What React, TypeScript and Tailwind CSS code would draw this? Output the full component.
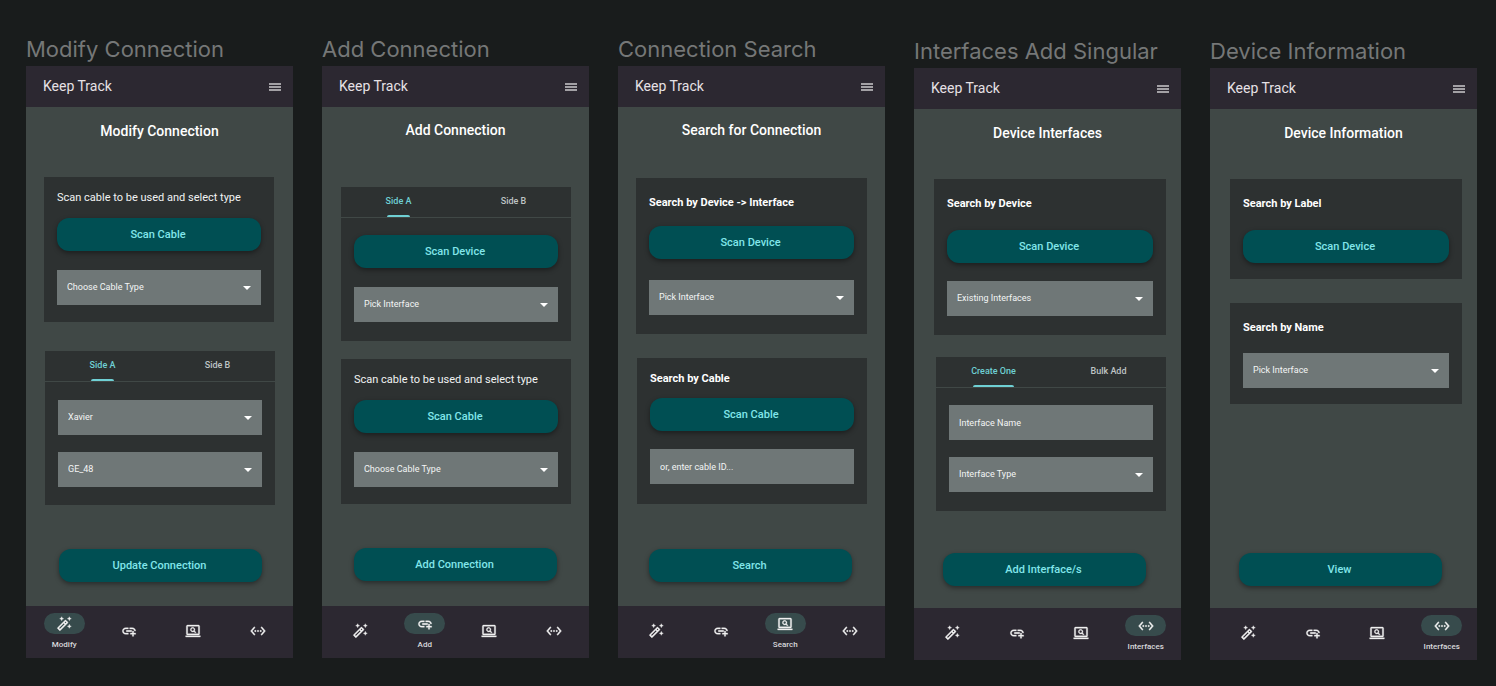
import React, { useState } from "react";
import {
  MdAddLink,
  MdOutlineAutoFixHigh,
  MdOutlineScreenSearchDesktop,
  MdSettingsEthernet,
} from "react-icons/md";
import clsx from "clsx";

const NAV_ITEMS = [
  { name: "Modify", Icon: MdOutlineAutoFixHigh },
  { name: "Add", Icon: MdAddLink },
  { name: "Search", Icon: MdOutlineScreenSearchDesktop },
  { name: "Interfaces", Icon: MdSettingsEthernet },
];

function BottomNav({ active }: { active: string }) {
  return (
    <nav className="flex h-[52px] bg-[#2c2831] pl-[6px] pr-[3px]">
      {NAV_ITEMS.map(({ name, Icon }) => {
        const isActive = name === active;
        return (
          <a
            key={name}
            href={`#${name.toLowerCase()}`}
            aria-label={name}
            aria-current={isActive ? "page" : undefined}
            className={clsx(
              "flex flex-1 flex-col items-center text-[#f1f1f1]",
              isActive ? "pt-[7px]" : "pt-[14px]"
            )}
          >
            <span
              className={clsx(
                "flex h-[21px] w-[41px] items-center justify-center rounded-full",
                isActive && "bg-[#374b4c]"
              )}
            >
              <Icon className="size-4 [&_path:not([fill=none])]:stroke-current [&_path:not([fill=none])]:stroke-[0.5]" />
            </span>
            {isActive && (
              <span className="mt-[6px] text-[8px] leading-[10px] font-medium text-[#d9d9dc]">{name}</span>
            )}
          </a>
        );
      })}
    </nav>
  );
}

type ScreenProps = {
  label: string;
  heading: string;
  nav: string;
  action: string;
  className?: string;
  headingClass?: string;
  actionClass: string;
  children: React.ReactNode;
};

function Screen({ label, heading, nav, action, className, headingClass, actionClass, children }: ScreenProps) {
  return (
    <section className={clsx("flex min-w-0 flex-col", className)}>
      <h2 className="pb-px font-['Inter',sans-serif] text-[22px] leading-8 whitespace-nowrap text-[#757777]">
        {label}
      </h2>
      <div className="flex flex-col">
        <header className="flex h-[41px] items-center justify-between bg-[#2c2831] pr-3 pb-px pl-[17px]">
          <span className="text-[14px] leading-5 text-[#e6e1e5]">Keep Track</span>
          <button type="button" aria-label="Menu" className="flex w-3 flex-col gap-px pt-[2px]">
            <span className="h-[2px] w-full bg-[#a3a1a5]" />
            <span className="h-[2px] w-full bg-[#a3a1a5]" />
            <span className="h-[2px] w-full bg-[#a3a1a5]" />
          </button>
        </header>
        <main className="flex min-h-[499px] flex-col bg-[#404846]">
          <h1
            className={clsx(
              "text-center text-[14px] leading-5 font-medium text-white",
              headingClass ?? "pt-[14px]"
            )}
          >
            {heading}
          </h1>
          {children}
          <div className={clsx("mt-auto", actionClass)}>
            <ActionButton>{action}</ActionButton>
          </div>
        </main>
        <BottomNav active={nav} />
      </div>
    </section>
  );
}

function ActionButton({ children }: { children: React.ReactNode }) {
  return (
    <button
      type="button"
      className="block h-[33px] w-full rounded-xl bg-[#004f53] pr-[2px] text-[11px] leading-4 font-medium text-[#82e6ea] shadow-[0_2px_5px_rgba(0,0,0,0.4)]"
    >
      {children}
    </button>
  );
}

function Card({ className, children }: { className: string; children: React.ReactNode }) {
  return <div className={clsx("bg-[#2d3131]", className)}>{children}</div>;
}

function Dropdown({ label, options = [] }: { label: string; options?: string[] }) {
  return (
    <div className="relative">
      <select
        aria-label={label}
        className="block h-[35px] w-full appearance-none bg-[#6f7777] pr-7 pb-px pl-[10px] text-[9px] leading-4 text-[#f3f5f5]"
      >
        <option>{label}</option>
        {options.map((option) => (
          <option key={option}>{option}</option>
        ))}
      </select>
      <svg
        viewBox="0 0 8 4"
        className="pointer-events-none absolute top-4 right-[10px] h-1 w-2 fill-white"
        aria-hidden="true"
      >
        <path d="M0 0h8L4 4z" />
      </svg>
    </div>
  );
}

function TextField({ label }: { label: string }) {
  return (
    <input
      type="text"
      aria-label={label}
      placeholder={label}
      className="block h-[35px] w-full bg-[#6f7777] px-[10px] text-[9px] leading-4 text-[#f3f5f5] placeholder:text-[#f3f5f5]"
    />
  );
}

function Tabs({ items }: { items: string[] }) {
  const [selected, setSelected] = useState(items[0]);
  return (
    <div role="tablist" className="flex h-[31px] border-b border-[#404846]">
      {items.map((item) => (
        <div key={item} className="flex flex-1 justify-center">
          <button
            type="button"
            role="tab"
            aria-selected={item === selected}
            onClick={() => setSelected(item)}
            className={clsx(
              "flex flex-col items-center justify-between text-[9px] leading-7 font-medium",
              item === selected ? "text-[#6fd0d4]" : "text-[#bec4c4]"
            )}
          >
            {item}
            {item === selected && <span className="h-[2px] w-11/12 rounded-t-full bg-[#6fd0d4]" />}
          </button>
        </div>
      ))}
    </div>
  );
}

function Hint({ children }: { children: React.ReactNode }) {
  return <p className="text-[11px] leading-4 whitespace-nowrap text-[#f1f3f3]">{children}</p>;
}

function CardTitle({ children }: { children: React.ReactNode }) {
  return <h3 className="text-[11px] leading-4 font-bold whitespace-nowrap text-white">{children}</h3>;
}

function ScanCableCard({ className }: { className: string }) {
  return (
    <Card className={clsx("px-[13px] pt-[13px] pb-[17px]", className)}>
      <Hint>Scan cable to be used and select type</Hint>
      <div className="mt-3 flex flex-col gap-[19px]">
        <ActionButton>Scan Cable</ActionButton>
        <Dropdown label="Choose Cable Type" />
      </div>
    </Card>
  );
}

export default function App() {
  return (
    <div className="min-h-screen bg-[#191c1c] pt-[33px] pr-[19px] pb-[26px] pl-[26px] font-['Roboto',sans-serif]">
      <div className="grid grid-cols-5 items-start gap-[29px]">
        <Screen
          label="Modify Connection"
          heading="Modify Connection"
          nav="Modify"
          action="Update Connection"
          actionClass="mr-[31px] mb-6 ml-[33px]"
        >
          <ScanCableCard className="mt-9 mr-[19px] ml-[18px]" />
          <Card className="mt-[29px] mr-[18px] ml-[19px]">
            <Tabs items={["Side A", "Side B"]} />
            <div className="flex flex-col gap-[17px] px-[13px] pt-[18px] pb-[18px]">
              <Dropdown label="Xavier" />
              <Dropdown label="GE_48" />
            </div>
          </Card>
        </Screen>

        <Screen
          label="Add Connection"
          heading="Add Connection"
          nav="Add"
          action="Add Connection"
          headingClass="pt-[13px]"
          actionClass="mx-8 mb-[25px]"
        >
          <Card className="mt-[47px] mr-[18px] ml-[19px]">
            <Tabs items={["Side A", "Side B"]} />
            <div className="flex flex-col gap-[19px] px-[13px] pt-[17px] pb-[19px]">
              <ActionButton>Scan Device</ActionButton>
              <Dropdown label="Pick Interface" />
            </div>
          </Card>
          <ScanCableCard className="mt-[18px] mr-[18px] ml-[19px]" />
        </Screen>

        <Screen
          label="Connection Search"
          heading="Search for Connection"
          nav="Search"
          action="Search"
          headingClass="pt-[13px]"
          actionClass="mr-[33px] mb-6 ml-[31px]"
        >
          <Card className="mt-[38px] mr-[18px] ml-[18px] px-[13px] pt-[17px] pb-[19px]">
            <CardTitle>Search by Device -&gt; Interface</CardTitle>
            <div className="mt-[15px] flex flex-col gap-[21px]">
              <ActionButton>Scan Device</ActionButton>
              <Dropdown label="Pick Interface" />
            </div>
          </Card>
          <Card className="mt-6 mr-[18px] ml-[19px] px-[13px] pt-[13px] pb-5">
            <CardTitle>Search by Cable</CardTitle>
            <div className="mt-[11px] flex flex-col gap-[18px]">
              <ActionButton>Scan Cable</ActionButton>
              <TextField label="or, enter cable ID..." />
            </div>
          </Card>
        </Screen>

        <Screen
          label="Interfaces Add Singular"
          heading="Device Interfaces"
          nav="Interfaces"
          action="Add Interface/s"
          className="pt-[2px]"
          actionClass="mr-[35px] mb-[22px] ml-[29px]"
        >
          <Card className="mt-9 mr-[15px] ml-[20px] px-[13px] pt-[17px] pb-[19px]">
            <CardTitle>Search by Device</CardTitle>
            <div className="mt-[18px] flex flex-col gap-[18px]">
              <ActionButton>Scan Device</ActionButton>
              <Dropdown label="Existing Interfaces" />
            </div>
          </Card>
          <Card className="mt-[22px] mr-[15px] ml-[22px]">
            <Tabs items={["Create One", "Bulk Add"]} />
            <div className="flex flex-col gap-[17px] px-[13px] pt-[17px] pb-[19px]">
              <TextField label="Interface Name" />
              <Dropdown label="Interface Type" />
            </div>
          </Card>
        </Screen>

        <Screen
          label="Device Information"
          heading="Device Information"
          nav="Interfaces"
          action="View"
          className="pt-[2px]"
          actionClass="mr-[35px] mb-[22px] ml-[29px]"
        >
          <Card className="mt-9 mr-[15px] ml-[20px] px-[13px] pt-[17px] pb-4">
            <CardTitle>Search by Label</CardTitle>
            <div className="mt-[18px]">
              <ActionButton>Scan Device</ActionButton>
            </div>
          </Card>
          <Card className="mt-6 mr-[15px] ml-[20px] px-[13px] pt-[17px] pb-4">
            <CardTitle>Search by Name</CardTitle>
            <div className="mt-[17px]">
              <Dropdown label="Pick Interface" />
            </div>
          </Card>
        </Screen>
      </div>
    </div>
  );
}
